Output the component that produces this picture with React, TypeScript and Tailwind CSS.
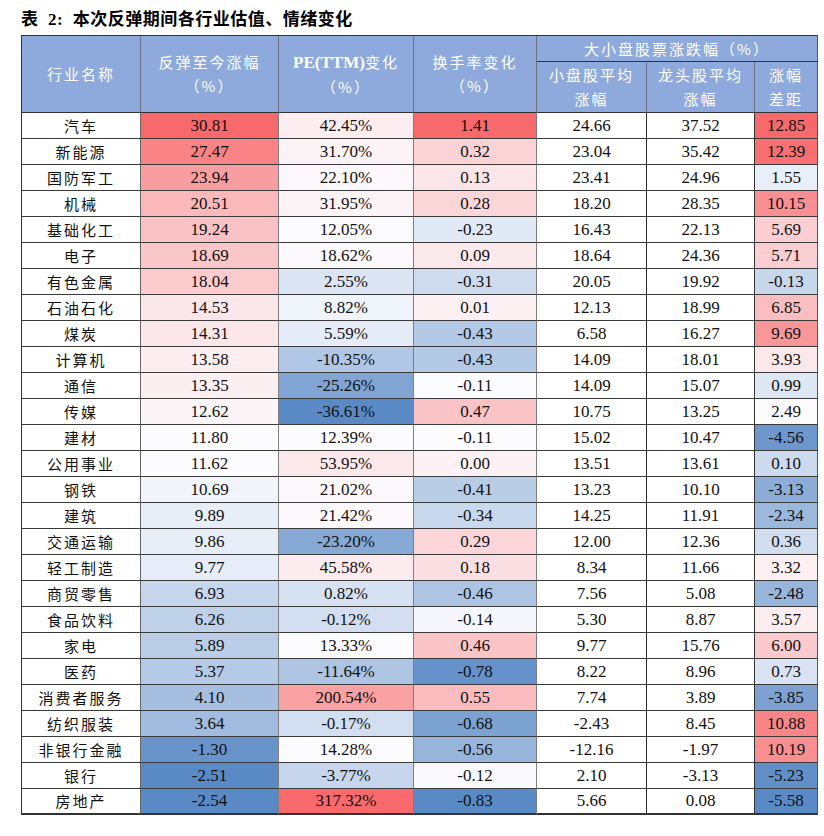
import React from "react";

type Row = [string, number, number, number, number, number, number];

const rows: Row[] = [
  ["汽车", 30.81, 42.45, 1.41, 24.66, 37.52, 12.85],
  ["新能源", 27.47, 31.7, 0.32, 23.04, 35.42, 12.39],
  ["国防军工", 23.94, 22.1, 0.13, 23.41, 24.96, 1.55],
  ["机械", 20.51, 31.95, 0.28, 18.2, 28.35, 10.15],
  ["基础化工", 19.24, 12.05, -0.23, 16.43, 22.13, 5.69],
  ["电子", 18.69, 18.62, 0.09, 18.64, 24.36, 5.71],
  ["有色金属", 18.04, 2.55, -0.31, 20.05, 19.92, -0.13],
  ["石油石化", 14.53, 8.82, 0.01, 12.13, 18.99, 6.85],
  ["煤炭", 14.31, 5.59, -0.43, 6.58, 16.27, 9.69],
  ["计算机", 13.58, -10.35, -0.43, 14.09, 18.01, 3.93],
  ["通信", 13.35, -25.26, -0.11, 14.09, 15.07, 0.99],
  ["传媒", 12.62, -36.61, 0.47, 10.75, 13.25, 2.49],
  ["建材", 11.8, 12.39, -0.11, 15.02, 10.47, -4.56],
  ["公用事业", 11.62, 53.95, 0.0, 13.51, 13.61, 0.1],
  ["钢铁", 10.69, 21.02, -0.41, 13.23, 10.1, -3.13],
  ["建筑", 9.89, 21.42, -0.34, 14.25, 11.91, -2.34],
  ["交通运输", 9.86, -23.2, 0.29, 12.0, 12.36, 0.36],
  ["轻工制造", 9.77, 45.58, 0.18, 8.34, 11.66, 3.32],
  ["商贸零售", 6.93, 0.82, -0.46, 7.56, 5.08, -2.48],
  ["食品饮料", 6.26, -0.12, -0.14, 5.3, 8.87, 3.57],
  ["家电", 5.89, 13.33, 0.46, 9.77, 15.76, 6.0],
  ["医药", 5.37, -11.64, -0.78, 8.22, 8.96, 0.73],
  ["消费者服务", 4.1, 200.54, 0.55, 7.74, 3.89, -3.85],
  ["纺织服装", 3.64, -0.17, -0.68, -2.43, 8.45, 10.88],
  ["非银行金融", -1.3, 14.28, -0.56, -12.16, -1.97, 10.19],
  ["银行", -2.51, -3.77, -0.12, 2.1, -3.13, -5.23],
  ["房地产", -2.54, 317.32, -0.83, 5.66, 0.08, -5.58],
];

const RED = [248, 105, 107];
const WHITE = [252, 252, 255];
const BLUE = [90, 138, 198];

// excel style 3-colour scale: min blue, median white, max red
const makeScale = (col: number) => {
  const vals = rows.map((r) => r[col] as number).sort((a, b) => a - b);
  const min = vals[0];
  const max = vals[vals.length - 1];
  const mid = vals[Math.floor(vals.length / 2)];
  return (v: number) => {
    const target = v >= mid ? RED : BLUE;
    const t = v >= mid ? (v - mid) / (max - mid || 1) : (mid - v) / (mid - min || 1);
    const c = WHITE.map((w, i) => Math.round(w + (target[i] - w) * t));
    return `rgb(${c[0]},${c[1]},${c[2]})`;
  };
};

const heatCols = [1, 2, 3, 6];
const scales: Record<number, (v: number) => string> = {};
heatCols.forEach((c) => (scales[c] = makeScale(c)));

const serif = "[font-family:'Liberation_Serif','Noto_Sans_CJK_SC',serif]";
const cjk = "[font-family:'Noto_Sans_CJK_SC','Liberation_Serif',sans-serif]";

const th = `bg-[#8ea9db] text-white text-[15px] font-normal tracking-[2px] leading-[24px] p-0 border-r border-b border-r-[#6a7284] border-b-[#333] ${cjk}`;

const App = () => {
  return (
    <div className="w-[824px] h-[836px] bg-white pl-[21px] pt-[7px]">
      <div className={`h-[28px] text-[17px] font-bold text-black leading-[26px] tracking-[0.5px] ${serif}`}>
        表&nbsp;&nbsp;2:&nbsp;&nbsp;本次反弹期间各行业估值、情绪变化
      </div>
      <table className="table-fixed w-[796px] border-separate border-spacing-0 border-l border-t border-[#333]">
        <colgroup>
          <col className="w-[119px]" />
          <col className="w-[138px]" />
          <col className="w-[135px]" />
          <col className="w-[123px]" />
          <col className="w-[110px]" />
          <col className="w-[108px]" />
          <col className="w-[63px]" />
        </colgroup>
        <thead>
          <tr className="h-[26px]">
            <th rowSpan={2} className={th}>行业名称</th>
            <th rowSpan={2} className={th}>
              反弹至今涨幅
              <br />（%）
            </th>
            <th rowSpan={2} className={th}>
              <span className={`text-[17px] tracking-normal font-bold ${serif}`}>PE(TTM)</span>变化
              <br />（%）
            </th>
            <th rowSpan={2} className={th}>
              换手率变化
              <br />（%）
            </th>
            <th colSpan={3} className={`${th} border-r-[#555]`}>大小盘股票涨跌幅（%）</th>
          </tr>
          <tr className="h-[51px]">
            <th className={th}>
              小盘股平均
              <br />涨幅
            </th>
            <th className={th}>
              龙头股平均
              <br />涨幅
            </th>
            <th className={`${th} border-r-[#555]`}>
              涨幅
              <br />差距
            </th>
          </tr>
        </thead>
        <tbody>
          {rows.map((r, ri) => {
            const last = ri === rows.length - 1;
            const bottom = last ? "border-b-2 border-b-[#333]" : "border-b border-b-[#3a3a3a]";
            return (
              <tr key={r[0]} className="h-[26px]">
                <td className={`text-center text-[15px] leading-[24px] p-0 tracking-[2px] text-[#111] border-r border-r-[#666] ${bottom} ${cjk}`}>
                  {r[0]}
                </td>
                {[1, 2, 3, 4, 5, 6].map((c) => {
                  const v = r[c] as number;
                  const text = v.toFixed(2) + (c === 2 ? "%" : "");
                  const bg = scales[c] ? scales[c](v) : "#ffffff";
                  const right = c === 6 ? "border-r border-r-[#555]" : c >= 4 ? "border-r border-r-[#333]" : "border-r border-r-[#7f7f7f]";
                  return (
                    <td
                      key={c}
                      className={`text-center text-[17px] leading-[24px] text-[#111] p-0 ${right} ${bottom} ${serif}`}
                      style={{ backgroundColor: bg }}
                    >
                      {text}
                    </td>
                  );
                })}
              </tr>
            );
          })}
        </tbody>
      </table>
    </div>
  );
};

export default App;
